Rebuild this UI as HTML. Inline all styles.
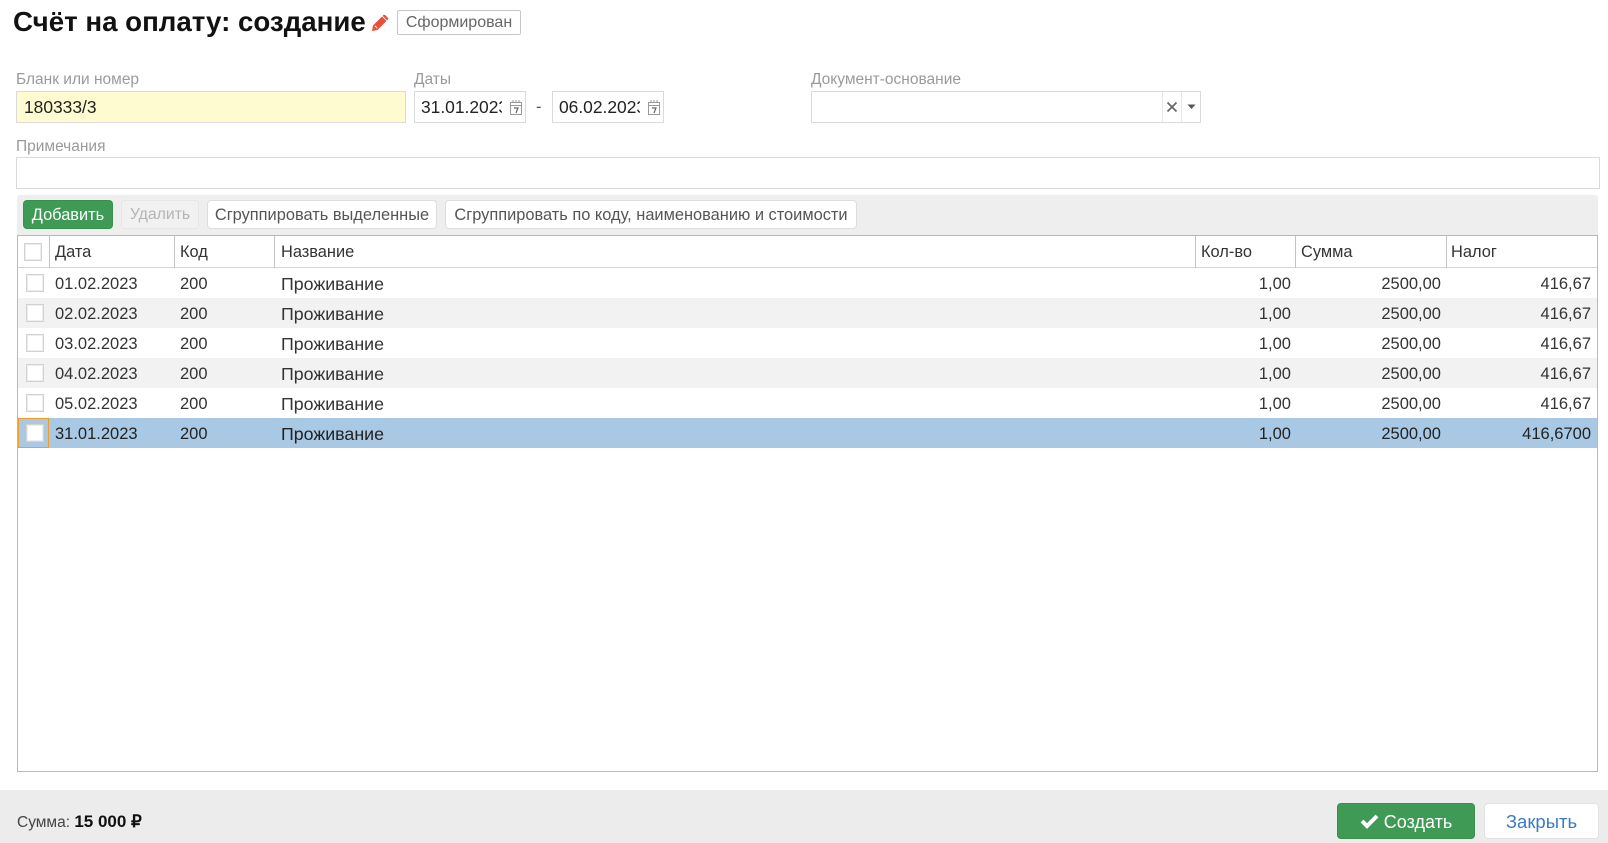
<!DOCTYPE html>
<html lang="ru"><head><meta charset="utf-8"><title>Счёт на оплату</title>
<style>
*{box-sizing:border-box}
html,body{margin:0;padding:0;background:#fff}
body{width:1608px;height:843px;position:relative;overflow:hidden;font-family:"Liberation Sans",sans-serif;font-size:16.5px;color:#333}
.a{position:absolute;white-space:nowrap}
.lbl{color:#9a9a9a;font-size:15.5px;line-height:20px}
.inp{position:absolute;border:1px solid #dadada;background:#fff;height:32px;line-height:31px;padding-left:6px;color:#222;overflow:hidden;white-space:nowrap;font-size:17.4px}
.btn{position:absolute;height:29px;line-height:28px;border:1px solid #ddd;border-radius:4px;background:#fff;text-align:center;white-space:nowrap;color:#555;font-size:16.4px}
.row{position:absolute;left:18px;width:1579px;height:30px;line-height:33px}
.row.g{background:#f2f2f2}
.row.s{background:#a8c8e4}
.row span{position:absolute;top:0;white-space:nowrap}
.row span.w{font-size:17.8px;line-height:32px}
.cb{position:absolute;left:8px;top:6px;width:18px;height:18px;border:1px solid #d2d2d2;background:#fff;box-shadow:inset 0 0 0 1px #eee}
.th{position:absolute;top:236px;height:32px;line-height:32px;white-space:nowrap;color:#333;font-size:16.4px}
.dv{position:absolute;top:236px;width:1px;height:32px;background:#c4c4c4}
</style></head><body>

<div class="a" style="left:13px;top:4px;font-size:27.7px;line-height:36px;font-weight:bold;color:#111">Счёт на оплату: создание</div>
<svg class="a" style="left:371px;top:14px" width="18" height="18" viewBox="0 0 18 18"><path d="M1 17l1-5.500L11 2.500l4.500 4.500-9 9z" fill="#e8503a"/><path d="M12.200 1.300a1.600 1.600 0 0 1 2.200 0l2.300 2.300a1.600 1.600 0 0 1 0 2.200l-.6.600-4.500-4.500z" fill="#e8503a"/><path d="M3.800 11.800l2.400 2.400" stroke="#fff" stroke-width=".9" fill="none"/></svg>
<div class="a" style="left:397px;top:10px;width:124px;height:25px;border:1px solid #c8c8c8;border-radius:2px;text-align:center;line-height:23px;color:#666;font-size:16px">Сформирован</div>

<div class="a lbl" style="left:16px;top:70px">Бланк или номер</div>
<div class="inp" style="left:16px;top:91px;width:390px;background:#fffbd0;padding-left:7px">180333/3</div>
<div class="a lbl" style="left:414px;top:70px">Даты</div>
<div class="inp" style="left:414px;top:91px;width:112px"><div style="width:81px;overflow:hidden">31.01.2023</div></div>
<svg class="a" style="left:509px;top:99px" width="14" height="17" viewBox="0 0 14 17"><g fill="none" stroke="#999" stroke-width="1"><rect x="1.500" y="3.500" width="11" height="12"/><path d="M1.500 6.500h11M4 1v3M7 1v3M10 1v3"/></g><path d="M5 9h4L7 14" fill="none" stroke="#666" stroke-width="1.200"/></svg>
<div class="a" style="left:536px;top:96px;color:#555;line-height:22px">-</div>
<div class="inp" style="left:552px;top:91px;width:112px"><div style="width:81px;overflow:hidden">06.02.2023</div></div>
<svg class="a" style="left:647px;top:99px" width="14" height="17" viewBox="0 0 14 17"><g fill="none" stroke="#999" stroke-width="1"><rect x="1.500" y="3.500" width="11" height="12"/><path d="M1.500 6.500h11M4 1v3M7 1v3M10 1v3"/></g><path d="M5 9h4L7 14" fill="none" stroke="#666" stroke-width="1.200"/></svg>

<div class="a lbl" style="left:811px;top:70px">Документ-основание</div>
<div class="inp" style="left:811px;top:91px;width:390px"></div>
<div class="a" style="left:1162px;top:92px;width:1px;height:30px;background:#e8e8e8"></div>
<div class="a" style="left:1181px;top:92px;width:1px;height:30px;background:#e8e8e8"></div>
<svg class="a" style="left:1166px;top:101px" width="12" height="12" viewBox="0 0 12 12"><path d="M1.500 1.500l9 9M10.500 1.500l-9 9" stroke="#666" stroke-width="1.700"/></svg>
<svg class="a" style="left:1187px;top:104px" width="9" height="6" viewBox="0 0 9 6"><path d="M0.500 0.500h8L4.500 5z" fill="#555"/></svg>

<div class="a lbl" style="left:16px;top:137px">Примечания</div>
<div class="inp" style="left:16px;top:157px;width:1584px"></div>

<div class="a" style="left:17px;top:195px;width:1581px;height:41px;background:#eee;border-radius:3px 3px 0 0"></div>
<div class="btn" style="left:23px;top:200px;width:90px;background:#3f9a55;border-color:#3a8f4e;color:#fff">Добавить</div>
<div class="btn" style="left:121px;top:200px;width:78px;background:#f1f1f1;border-color:#e6e6e6;color:#b4b4b4;font-size:15.800px">Удалить</div>
<div class="btn" style="left:207px;top:200px;width:230px">Сгруппировать выделенные</div>
<div class="btn" style="left:445px;top:200px;width:412px">Сгруппировать по коду, наименованию и стоимости</div>

<div class="a" style="left:17px;top:235px;width:1581px;height:537px;border:1px solid #b8b8b8;background:#fff"></div>
<div class="a" style="left:18px;top:267px;width:1579px;height:1px;background:#d4d4d4"></div>
<div class="dv" style="left:49px"></div><div class="dv" style="left:174px"></div><div class="dv" style="left:274px"></div><div class="dv" style="left:1195px"></div><div class="dv" style="left:1295px"></div><div class="dv" style="left:1446px"></div>
<div class="cb" style="left:24px;top:243px"></div>
<div class="th" style="left:55px">Дата</div><div class="th" style="left:180px">Код</div><div class="th" style="left:281px">Название</div><div class="th" style="left:1201px">Кол-во</div><div class="th" style="left:1301px">Сумма</div><div class="th" style="left:1451px">Налог</div>

<div class="row" style="top:268px"><i class="cb"></i><span style="left:37px">01.02.2023</span><span style="left:162px">200</span><span class="w" style="left:263px">Проживание</span><span style="right:306px">1,00</span><span style="right:156px">2500,00</span><span style="right:6px">416,67</span></div>
<div class="row g" style="top:298px"><i class="cb"></i><span style="left:37px">02.02.2023</span><span style="left:162px">200</span><span class="w" style="left:263px">Проживание</span><span style="right:306px">1,00</span><span style="right:156px">2500,00</span><span style="right:6px">416,67</span></div>
<div class="row" style="top:328px"><i class="cb"></i><span style="left:37px">03.02.2023</span><span style="left:162px">200</span><span class="w" style="left:263px">Проживание</span><span style="right:306px">1,00</span><span style="right:156px">2500,00</span><span style="right:6px">416,67</span></div>
<div class="row g" style="top:358px"><i class="cb"></i><span style="left:37px">04.02.2023</span><span style="left:162px">200</span><span class="w" style="left:263px">Проживание</span><span style="right:306px">1,00</span><span style="right:156px">2500,00</span><span style="right:6px">416,67</span></div>
<div class="row" style="top:388px"><i class="cb"></i><span style="left:37px">05.02.2023</span><span style="left:162px">200</span><span class="w" style="left:263px">Проживание</span><span style="right:306px">1,00</span><span style="right:156px">2500,00</span><span style="right:6px">416,67</span></div>
<div class="row s" style="top:418px;color:#222"><i class="cb"></i><span style="left:37px">31.01.2023</span><span style="left:162px">200</span><span class="w" style="left:263px">Проживание</span><span style="right:306px">1,00</span><span style="right:156px">2500,00</span><span style="right:6px">416,6700</span></div>
<div class="a" style="left:18px;top:418px;width:31px;height:30px;border:1px solid #f59a23"></div>

<div class="a" style="left:0;top:790px;width:1608px;height:53px;background:#ececec"></div>
<div class="a" style="left:17px;top:811px;line-height:22px;font-size:15.500px;color:#444">Сумма: <b style="color:#111;font-size:17px">15 000 ₽</b></div>
<div class="btn" style="left:1337px;top:803px;width:138px;height:36px;line-height:36px;background:#3f9a55;border-color:#3a8f4e;color:#fff;font-size:18px;padding-left:24px">Создать</div>
<svg class="a" style="left:1360px;top:813px" width="19" height="16" viewBox="0 0 19 16"><path d="M2 8l5 5L17 3" fill="none" stroke="#fff" stroke-width="4"/></svg>
<div class="btn" style="left:1484px;top:803px;width:115px;height:36px;line-height:36px;color:#3a7cc4;font-size:18.500px;border-color:#e2e2e2">Закрыть</div>
</body></html>
